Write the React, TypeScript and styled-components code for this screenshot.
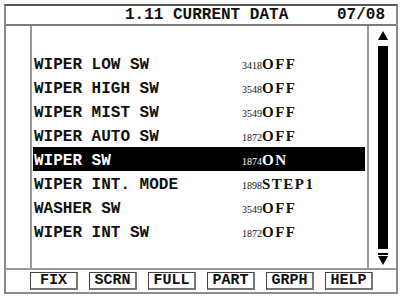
import React from 'react'
import styled, { createGlobalStyle } from 'styled-components'

const GlobalStyle = createGlobalStyle`
  html, body {
    margin: 0;
    padding: 0;
    background: #fff;
  }
`

interface Row {
  label: string
  code?: string
  value?: string
  selected?: boolean
}

const rows: Row[] = [
  { label: '' },
  { label: 'WIPER LOW SW', code: '3418', value: 'OFF' },
  { label: 'WIPER HIGH SW', code: '3548', value: 'OFF' },
  { label: 'WIPER MIST SW', code: '3549', value: 'OFF' },
  { label: 'WIPER AUTO SW', code: '1872', value: 'OFF' },
  { label: 'WIPER SW', code: '1874', value: 'ON', selected: true },
  { label: 'WIPER INT. MODE', code: '1898', value: 'STEP1' },
  { label: 'WASHER SW', code: '3549', value: 'OFF' },
  { label: 'WIPER INT SW', code: '1872', value: 'OFF' },
]

const keys = ['FIX', 'SCRN', 'FULL', 'PART', 'GRPH', 'HELP']

const Screen = styled.div`
  margin: 4px 0 0 4px;
  width: 390px;
  height: 286px;
  border: 2px solid #8c8c8c;
  border-top-color: #555;
  display: grid;
  grid-template-rows: 20px 1fr 22px;
  background: #fff;
  color: #000;
`

const Header = styled.div`
  display: flex;
  align-items: center;
  border-bottom: 2px solid #7a7a7a;
  font-family: 'Liberation Mono', monospace;
  font-weight: bold;
  font-size: 16px;
  color: #111;
`

const Title = styled.div`
  margin-left: 119px;
  width: 212px;
`

const Page = styled.div``

const Body = styled.div`
  display: grid;
  grid-template-columns: 26px 1fr 27px;
  border-bottom: 2px solid #9a9a9a;
`

const Gutter = styled.div`
  border-right: 2px solid #9a9a9a;
`

const List = styled.div`
  padding: 1px 2px 0 1px;
  border-right: 2px solid #9a9a9a;
`

const Line = styled.div<{ $selected?: boolean }>`
  height: 24px;
  display: flex;
  align-items: center;
  padding-top: 3px;
  box-sizing: border-box;
  background: ${(p) => (p.$selected ? '#000' : 'transparent')};
  color: ${(p) => (p.$selected ? '#fff' : '#111')};
`

const Label = styled.span`
  width: 208px;
  padding-left: 1px;
  font-family: 'Liberation Mono', monospace;
  font-weight: bold;
  font-size: 16px;
  white-space: pre;
`

const Code = styled.span`
  font-family: 'Liberation Serif', serif;
  font-size: 10px;
  padding-top: 2px;
`

const Value = styled.span`
  font-family: 'Liberation Serif', serif;
  font-weight: bold;
  font-size: 15px;
  letter-spacing: 1.5px;
`

const Scroll = styled.div`
  display: flex;
  flex-direction: column;
  align-items: center;
  padding: 5px 0 3px 1px;
  gap: 4px;
`

const Thumb = styled.div`
  flex: 1;
  width: 10px;
  background: #000;
`

const Arrow = styled.svg`
  display: block;
`

const Footer = styled.div`
  display: flex;
  align-items: center;
  padding-left: 24px;
  gap: 11px;
`

const Key = styled.div`
  width: 45px;
  height: 15px;
  border: 1px solid #444;
  border-right: 2px solid #777;
  border-bottom: 2px solid #777;
  display: flex;
  align-items: center;
  justify-content: center;
  font-family: 'Liberation Mono', monospace;
  font-weight: bold;
  font-size: 15px;
  color: #111;
`

export default function App() {
  return (
    <>
      <GlobalStyle />
      <Screen>
        <Header>
          <Title>1.11 CURRENT DATA</Title>
          <Page>07/08</Page>
        </Header>
        <Body>
          <Gutter />
          <List>
            {rows.map((r, i) => (
              <Line key={i} $selected={r.selected}>
                <Label>{r.label}</Label>
                {r.code && <Code>{r.code}</Code>}
                {r.value && <Value>{r.value}</Value>}
              </Line>
            ))}
          </List>
          <Scroll>
            <Arrow width="10" height="11" viewBox="0 0 10 11">
              <path d="M5 0 L10 9 L0 9 Z" fill="#000" />
            </Arrow>
            <Thumb />
            <Arrow width="10" height="12" viewBox="0 0 10 12">
              <rect x="0" y="0" width="10" height="2" fill="#000" />
              <path d="M0 3 L10 3 L5 12 Z" fill="#000" />
            </Arrow>
          </Scroll>
        </Body>
        <Footer>
          {keys.map((k) => (
            <Key key={k}>{k}</Key>
          ))}
        </Footer>
      </Screen>
    </>
  )
}
